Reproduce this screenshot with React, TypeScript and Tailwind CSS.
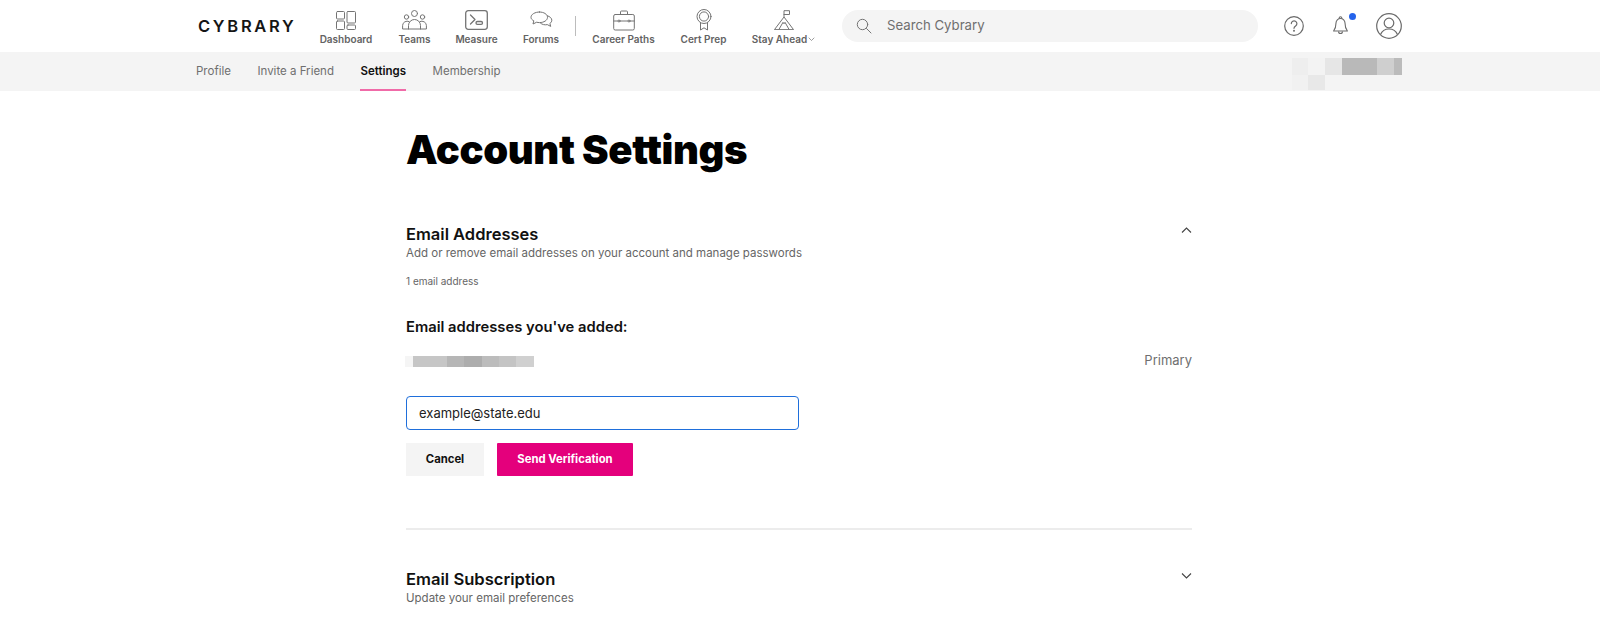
import React from "react";

const S = { fill: "none", stroke: "#747474", strokeWidth: 1, strokeLinecap: "round" as const, strokeLinejoin: "round" as const };

function NavItem({ label, className, children, chev }: { label: string; className: string; children: React.ReactNode; chev?: boolean }) {
  return (
    <div className={`flex flex-col items-center shrink-0 ${className}`}>
      <div className="h-[22px] flex items-center justify-center">{children}</div>
      <div className="mt-[1px] text-[10px] leading-[14px] font-semibold text-[#636363] whitespace-nowrap flex items-center">
        {label}
        {chev && (
          <svg width="7" height="5" viewBox="0 0 7 5" className="ml-[1px]"><path d="M1 1l2.500 2.500L6 1" {...S} strokeWidth={0.7} /></svg>
        )}
      </div>
    </div>
  );
}

function Mosaic({ cells, className }: { cells: [string, string][]; className?: string }) {
  return (
    <div className={`flex ${className ?? ""}`}>
      {cells.map(([w, c], i) => (
        <div key={i} style={{ width: w, background: c }} />
      ))}
    </div>
  );
}

export default function App() {
  return (
    <div className="w-[1600px] h-[642px] overflow-hidden bg-white font-['Inter','Liberation_Sans',sans-serif]">
      <header className="h-[52px] flex items-center pl-[198px]">
        <div className="w-[122px] shrink-0 text-[16.5px] font-semibold tracking-[2.7px] text-[#151515] leading-none whitespace-nowrap">CYBRARY</div>
        <div className="flex items-start self-start mt-[9px]">
          <NavItem label="Dashboard" className="w-[52px]">
            <svg width="20" height="19" viewBox="0 0 20 19" {...S}>
              <rect x="0.500" y="0.500" width="8" height="7.500" rx="1" />
              <rect x="11" y="0.500" width="8.500" height="11.500" rx="1" />
              <rect x="0.500" y="10" width="8" height="8.500" rx="1" />
              <rect x="11" y="14" width="8.500" height="4.500" rx="1" />
            </svg>
          </NavItem>
          <NavItem label="Teams" className="w-[31px] ml-[27px]">
            <svg width="25" height="20" viewBox="0 0 25 20" {...S}>
              <circle cx="12.500" cy="3.500" r="3" />
              <circle cx="4.500" cy="7" r="2.200" />
              <circle cx="20.500" cy="7" r="2.200" />
              <path d="M6.500 19v-3.500a6 6 0 0 1 12 0V19" />
              <path d="M7 11.500A4.500 4.500 0 0 0 .6 15.500V19h23.800v-3.500A4.500 4.500 0 0 0 18 11.500" />
            </svg>
          </NavItem>
          <NavItem label="Measure" className="w-[41px] ml-[26px]">
            <svg width="23" height="20" viewBox="0 0 23 20" fill="none" stroke="#747474" strokeWidth="1.300" strokeLinecap="round" strokeLinejoin="round">
              <rect x="0.700" y="0.700" width="21.600" height="18.600" rx="2.500" />
              <path d="M5.500 5l4.500 4.500L5.500 14" />
              <rect x="11" y="11.500" width="6.500" height="2.800" rx="1.400" />
            </svg>
          </NavItem>
          <NavItem label="Forums" className="w-[36px] ml-[26px]">
            <svg width="23" height="18" viewBox="0 0 23 18" {...S}>
              <path d="M9.500 1C14 1 17.500 3.300 17.500 6.300s-3.500 5.300-8 5.300c-1 0-2-.1-2.800-.4L3 13l.8-3.200C2 8.900 1 7.700 1 6.300 1 3.300 5 1 9.500 1z" />
              <path d="M17.500 4.800c2.500.8 4.300 2.400 4.300 4.400 0 1.300-.7 2.400-1.900 3.200l.8 3-3.400-1.800c-2.500.6-5.300 0-6.900-1.600" />
            </svg>
          </NavItem>
          <div className="w-[1px] h-[20px] bg-[#bcbcbc] ml-[16px] mt-[7px]" />
          <NavItem label="Career Paths" className="w-[61px] ml-[17px]">
            <svg width="22" height="21" viewBox="0 0 22 21" {...S}>
              <rect x="0.700" y="4.500" width="20.600" height="15.500" rx="1.500" />
              <path d="M7.500 4.500V2a1 1 0 0 1 1-1h5a1 1 0 0 1 1 1v2.500" />
              <path d="M.7 11h20.600" />
              <circle cx="6" cy="11" r="1" fill="#fff" />
              <circle cx="16" cy="11" r="1" fill="#fff" />
            </svg>
          </NavItem>
          <NavItem label="Cert Prep" className="w-[45px] ml-[27px]">
            <svg width="16" height="22" viewBox="0 0 16 22" {...S}>
              <circle cx="8" cy="7.500" r="7" />
              <circle cx="8" cy="7.500" r="4.600" />
              <path d="M4.500 14v7L8 18.800l3.500 2.200v-7" />
            </svg>
          </NavItem>
          <NavItem label="Stay Ahead" className="w-[61px] ml-[27px]" chev>
            <svg width="20" height="20" viewBox="0 0 20 20" {...S}>
              <path d="M10 7V.7h5.500v3.800H10" />
              <path d="M.7 19.300L10 7l9.300 12.300z" />
              <path d="M5 19.300l4-7 1 1.500 1-1.500 4 7" />
            </svg>
          </NavItem>
        </div>
        <div className="ml-[28px] w-[416px] h-[32px] rounded-[16px] bg-[#f4f4f4] flex items-center pl-[14px] shrink-0">
          <svg width="16" height="16" viewBox="0 0 16 16" {...S}>
            <circle cx="6.500" cy="6.500" r="5.200" />
            <path d="M10.500 10.500L15 15" />
          </svg>
          <span className="ml-[15px] text-[13.2px] text-[#6f6f6f]">Search Cybrary</span>
        </div>
        <svg className="ml-[26px] shrink-0" width="20" height="20" viewBox="0 0 20 20" fill="none" stroke="#6a6a6a" strokeWidth="1.200" strokeLinecap="round">
          <circle cx="10" cy="10" r="9.300" />
          <path d="M7.300 7.600a2.800 2.800 0 1 1 4.300 2.400c-1 .7-1.600 1.200-1.600 2.300" />
          <circle cx="10" cy="14.800" r=".4" fill="#6a6a6a" />
        </svg>
        <div className="relative ml-[29px] shrink-0 w-[15px] h-[20px]">
          <svg width="15" height="20" viewBox="0 0 15 20" fill="none" stroke="#6a6a6a" strokeWidth="1.100" strokeLinejoin="round">
            <path d="M7.500 2.500a4.500 4.500 0 0 0-4.500 4.500c0 4.500-1.200 6.500-2.400 8h13.800c-1.200-1.500-2.400-3.500-2.400-8a4.500 4.500 0 0 0-4.500-4.500z" />
            <path d="M6.200 2.500V2a1.300 1.300 0 0 1 2.600 0v.5M5.500 15.500a2 2 0 0 0 4 0" />
          </svg>
          <span className="absolute top-[-3px] right-[-8px] w-[7px] h-[7px] rounded-full bg-[#2563eb]" />
        </div>
        <svg className="ml-[28px] shrink-0" width="26" height="26" viewBox="0 0 26 26" fill="none" stroke="#6a6a6a" strokeWidth="1.200">
          <circle cx="13" cy="13" r="12.300" />
          <circle cx="13" cy="10" r="4.800" />
          <path d="M4.500 21.500c1.500-3.500 4.500-5.500 8.500-5.500s7 2 8.500 5.500" />
        </svg>
      </header>

      <nav className="h-[39px] bg-[#f4f4f4] flex justify-between pl-[196px] pr-[198px]">
        <div className="flex gap-[26.5px] text-[11.5px] leading-[39px]">
          <div className="text-[#6f6f6f]">Profile</div>
          <div className="text-[#6f6f6f]">Invite a Friend</div>
          <div className="font-semibold text-[#111] h-[39px] border-b-2 border-[#f06ba8]">Settings</div>
          <div className="text-[#6f6f6f]">Membership</div>
        </div>
        <div className="mt-[6px] w-[110px] flex flex-col">
          <Mosaic className="h-[17px]" cells={[["16px", "#eeeeee"], ["17px", "#f3f3f3"], ["17px", "#e6e6e6"], ["35px", "#b9b9b9"], ["17px", "#cfcfcf"], ["8px", "#bbbbbb"]]} />
          <Mosaic className="h-[15px]" cells={[["16px", "#f1f1f1"], ["17px", "#e8e8e8"]]} />
        </div>
      </nav>

      <main className="w-[786px] ml-[406px]">
        <h1 className="mt-[35px] text-[40px] leading-[48px] font-black text-black tracking-[-0.4px]">Account Settings</h1>

        <section className="mt-[49px] flex justify-between">
          <div>
            <h2 className="text-[16.5px] leading-[22px] font-semibold text-[#111]">Email Addresses</h2>
            <p className="mt-[1px] text-[11.5px] leading-[15px] text-[#666]">Add or remove email addresses on your account and manage passwords</p>
          </div>
          <svg className="mt-[4px]" width="11" height="7" viewBox="0 0 11 7" fill="none" stroke="#444" strokeWidth="1.100"><path d="M1 5.500l4.500-4.500 4.500 4.500" /></svg>
        </section>
        <p className="mt-[14px] text-[10px] leading-[12px] text-[#666]">1 email address</p>
        <h3 className="mt-[31px] text-[14.75px] leading-[18px] font-semibold text-[#111]">Email addresses you've added:</h3>
        <div className="mt-[16px] h-[20px] flex items-start justify-between">
          <Mosaic className="h-[11px] mt-[4px] -ml-[1px]" cells={[["8px", "#f5f5f5"], ["34px", "#c6c6c6"], ["17px", "#b6b6b6"], ["18px", "#adadad"], ["17px", "#bcbcbc"], ["17px", "#c4c4c4"], ["18px", "#d0d0d0"]]} />
          <span className="text-[13px] leading-[16px] text-[#6f6f6f]">Primary</span>
        </div>
        <input
          readOnly
          value="example@state.edu"
          className="block mt-[24px] w-[393px] h-[34px] rounded-[4px] border-[1.5px] border-[#1f6fdb] px-[12px] text-[13px] text-[#222] outline-none bg-white"
        />
        <div className="mt-[13px] flex gap-[13px]">
          <button className="w-[78px] h-[33px] bg-[#f4f4f4] text-[11.3px] font-bold text-[#111]">Cancel</button>
          <button className="w-[136px] h-[33px] bg-[#e4007c] text-[11.3px] font-bold text-white rounded-[1px]">Send Verification</button>
        </div>
        <div className="mt-[52px] h-[2px] bg-[#ececec]" />
        <section className="mt-[38px] flex justify-between">
          <div>
            <h2 className="text-[16.6px] leading-[22px] font-semibold text-[#111]">Email Subscription</h2>
            <p className="mt-[1px] text-[11.5px] leading-[15px] text-[#666]">Update your email preferences</p>
          </div>
          <svg className="mt-[4px]" width="11" height="7" viewBox="0 0 11 7" fill="none" stroke="#444" strokeWidth="1.100"><path d="M1 1.500l4.500 4.500 4.500-4.500" /></svg>
        </section>
      </main>
    </div>
  );
}
